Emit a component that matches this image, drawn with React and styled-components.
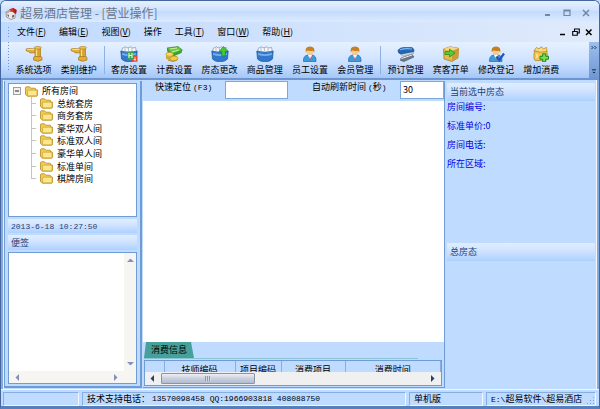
import React, { useState } from 'react';
import styled, { createGlobalStyle } from 'styled-components';

const GlobalStyle = createGlobalStyle`
    * {
        box-sizing: border-box;
    }

    body {
        margin: 0;
        background: #bfdbff;
        font-family: "Noto Sans CJK SC", sans-serif;
        font-size: 9px;
        line-height: 12px;
        color: #000;
    }

    button, input, textarea {
        font: inherit;
        color: inherit;
    }

    button {
        border: none;
        background: none;
        padding: 0;
    }
`;

const Window = styled.div`
    display: flex;
    flex-direction: column;
    min-height: 100vh;
    border: 1px solid #44669e;
    border-bottom: 3px solid #5680bd;
    border-radius: 6px 6px 0 0;
    background: #bfdbff;
    overflow: hidden;
`;

const TitleBar = styled.header`
    display: flex;
    align-items: center;
    gap: 3px;
    height: 21px;
    padding: 3px 9px 0 4px;
    background: linear-gradient(#e6f0ff, #cfe2fe 45%, #c4dbfc 50%, #dceaff);
`;

const Title = styled.h1`
    flex: 1;
    margin: 0;
    font-size: 12px;
    line-height: 16px;
    font-weight: 400;
    color: #69768c;
`;

const Controls = styled.div`
    display: flex;
    align-items: center;
    gap: ${(p) => p.$gap};
    color: ${(p) => p.$color};

    button {
        display: flex;
    }
`;

const MenuBar = styled.nav`
    display: flex;
    align-items: center;
    gap: 13px;
    height: 20px;
    padding: 0 6px 0 7px;
    background: linear-gradient(90deg, #c1daff, #dfeafb);
`;

const MenuButton = styled.button`
    line-height: 14px;
    white-space: nowrap;
`;

const Grip = styled.span`
    width: 1px;
    height: ${(p) => p.$size};
    margin-right: ${(p) => p.$space};
    background: repeating-linear-gradient(#6d97d2 0 1px, transparent 1px 3px);
`;

const Spacer = styled.span`
    flex: 1;
`;

const ToolBar = styled.div`
    display: flex;
    height: 38px;
    background: linear-gradient(#e6f1ff, #d3e5ff 45%, #bcd7ff 75%, #a5c6f5);
    border-bottom: 2px solid #6d96d0;
    padding-left: 7px;
`;

const ToolGroup = styled.div`
    flex: 1;
    display: flex;
    padding: 4px 25px 0 1px;
`;

const ToolButton = styled.button`
    flex: 1;
    display: flex;
    flex-direction: column;
    align-items: center;
    gap: 2px;
    line-height: 12px;
    white-space: nowrap;
`;

const Divider = styled.span`
    width: 1px;
    height: 28px;
    margin: 0 2px;
    background: #8fb2e3;
`;

const ToolMore = styled.button`
    display: flex;
    flex-direction: column;
    justify-content: space-between;
    align-items: center;
    width: 10px;
    padding: 3px 0;
    background: linear-gradient(#9dbfee, #6f97d2);
`;

const Body = styled.main`
    flex: 1;
    display: flex;
    min-height: 0;
    border: solid #86a9dc;
    border-width: 0 2px;
    padding: 1px 1px 0;
    box-shadow: inset 1px 0 #e9f3ff, inset -1px 0 #f3f8ff;
`;

const Sidebar = styled.aside`
    flex: 0 0 138px;
    display: flex;
    flex-direction: column;
    gap: 2px;
    margin-bottom: 1px;
    padding: 2px 3px;
    border: solid #6f9bd6;
    border-width: 0 2px 2px 1px;
`;

const Tree = styled.ul`
    flex: 1;
    margin: 0;
    padding: 1px 0 0 4px;
    list-style: none;
    background: #fff;
    border: 1px solid #6f9bd6;
`;

const Branch = styled.ul`
    display: grid;
    grid-auto-rows: 1fr;
    height: 88px;
    margin: 0 0 0 18px;
    padding: 0;
    list-style: none;
    background: linear-gradient(#c4c4c4, #c4c4c4) 0 0 / 1px 82px no-repeat;
`;

const Leaf = styled.li`
    display: flex;
    align-items: center;
    gap: 4px;
    line-height: 11px;
    white-space: nowrap;

    &::before {
        content: "";
        width: 5px;
        height: 1px;
        background: #c4c4c4;
    }
`;

const Expander = styled.button`
    display: flex;
`;

const RootRow = styled.div`
    display: flex;
    align-items: center;
    gap: 4px;
    height: 12px;
`;

const PanelHead = styled.h2`
    margin: 0;
    height: ${(p) => p.$height};
    padding: 0 3px;
    font-size: 9px;
    line-height: ${(p) => p.$height};
    font-weight: 400;
    color: #1c3f78;
    background: linear-gradient(#e2eeff, #cde1ff 50%, #add1ff);
`;

const Mono = styled.span`
    font-family: "Liberation Mono", monospace;
    font-size: 8px;
`;

const NoteBox = styled.div`
    flex: 1;
    display: grid;
    grid-template: 1fr 12px / 1fr 12px;
    background: #fff;
    border: 1px solid #6f9bd6;
`;

const NoteText = styled.textarea`
    width: 100%;
    height: 100%;
    border: none;
    outline: none;
    padding: 2px;
    resize: none;
    background: #fff;
`;

const Scroll = styled.div`
    display: flex;
    flex-direction: ${(p) => (p.$vertical ? 'column' : 'row')};
    align-items: center;
    justify-content: space-between;
    padding: ${(p) => (p.$vertical ? '4px 0' : '0 5px')};
    background: #f6f5f2;

    button {
        display: flex;
    }
`;

const Center = styled.section`
    flex: 1;
    display: flex;
    flex-direction: column;
    min-width: 0;
    margin: 0 0 1px 1px;
    background: #fff;
    border: solid #6f9bd6;
    border-width: 0 1px 1px 0;
`;

const FilterBar = styled.form`
    display: flex;
    align-items: flex-start;
    height: 20px;
    padding-left: 12px;
    background: #bfdbff;
`;

const FieldLabel = styled.label`
    width: ${(p) => p.$width};
    margin-left: ${(p) => p.$gap || 0};
    line-height: 11px;
    white-space: nowrap;
`;

const Field = styled.input`
    width: ${(p) => p.$width};
    flex: ${(p) => (p.$width ? 'none' : 1)};
    min-width: 0;
    height: 18px;
    padding: 0 2px 2px;
    border: 1px solid #7ba6df;
    border-radius: 0;
    background: #fff;
    outline: none;
`;

const RoomArea = styled.div`
    flex: 1;
`;

const Bill = styled.div`
    padding: 0 2px 1px 1px;
    background: #bfdbff;
`;

const Tabs = styled.div`
    width: 92%;
    height: 17px;
    border-bottom: 1px solid #8cc3d6;
`;

const Tab = styled.button`
    height: 16px;
    width: 50px;
    line-height: 16px;
    background: #48a09b;
    clip-path: polygon(2px 0, 47px 0, 100% 100%, 0 100%);
`;

const BillGrid = styled.div`
    margin-top: 1px;
    border: 1px solid #6f9bd6;
`;

const HeadClip = styled.div`
    height: 11px;
    overflow: hidden;
`;

const BillTable = styled.table`
    width: 100%;
    table-layout: fixed;
    border-collapse: collapse;

    th {
        height: 16px;
        padding: 1px 0 0;
        font-weight: 400;
        line-height: 14px;
        border-right: 1px solid #86aee3;
        white-space: nowrap;
    }
`;

const ThumbTrack = styled.div`
    display: flex;
    align-items: center;
    gap: 5px;
    height: 13px;
    padding: 0 5px 0 4px;
    background: #f0f0f0;

    button {
        display: flex;
    }
`;

const Thumb = styled.span`
    width: 94px;
    height: 11px;
    display: flex;
    align-items: center;
    justify-content: center;
    border: 1px solid #8b93a8;
    border-radius: 1px;
    background: linear-gradient(#eceff6, #c9cfdd 50%, #b3bccf);

    &::after {
        content: "";
        width: 6px;
        height: 5px;
        background: repeating-linear-gradient(90deg, #8f97aa 0 1px, #d5dae5 1px 2px);
    }
`;

const InfoColumn = styled.aside`
    flex: 0 0 151px;
    display: flex;
    flex-direction: column;
    padding: 2px 1px 0 2px;
`;

const InfoPanel = styled.section`
    flex: ${(p) => p.$grow} 1 0;
`;

const RoomFacts = styled.dl`
    display: grid;
    grid-template-columns: max-content 1fr;
    grid-auto-rows: 19px;
    margin: 0;
    line-height: 12px;
    color: #0000e0;

    dd {
        margin: 0;
    }
`;

const StatusBar = styled.footer`
    display: flex;
    gap: 3px;
    padding: 2px 3px 0 2px;
    border-top: 1px solid #f3f8ff;
`;

const StatusCell = styled.div`
    flex: ${(p) => p.$flex};
    display: flex;
    align-items: center;
    gap: 2px;
    height: 14px;
    padding-left: 4px;
    border: 1px solid;
    border-color: #86aee3 #f0f7ff #f0f7ff #86aee3;
    white-space: nowrap;
    overflow: hidden;
`;

const Pic = ({ w = 18, h = 16, children }) => (
    <svg width={w} height={h} viewBox={`0 0 ${w} ${h}`} aria-hidden="true">
        {children}
    </svg>
);

const Arrow = ({ dir, color = '#8191bd' }) => {
    const shapes = {
        up: 'M0 5 L3.5 1.5 L7 5Z',
        down: 'M0 2 L3.5 5.5 L7 2Z',
        left: 'M5 0 L1.5 3.5 L5 7Z',
        right: 'M2 0 L5.5 3.5 L2 7Z',
    };
    return (
        <Pic w={7} h={7}>
            <path d={shapes[dir]} fill={color} />
        </Pic>
    );
};

const Tap = () => (
    <Pic>
        <path d="M1 3.5 Q1 2.5 3 2.5 L11 3 V6.5 L7 7 Q4 7 3.5 5.5 L1.5 5Z" fill="#e0ae37" stroke="#a8761a" strokeWidth=".7" />
        <path d="M2 3.3 L10 3.7" stroke="#fae79a" strokeWidth=".9" />
        <path d="M10 1.5 H15.5 V12 H10Z" fill="#dca32b" stroke="#a8761a" strokeWidth=".7" />
        <path d="M11.5 2 V12" stroke="#f9df83" strokeWidth="1.3" />
        <ellipse cx="12.8" cy="1.8" rx="3.7" ry="1.3" fill="#f0c957" stroke="#a8761a" strokeWidth=".6" />
        <path d="M8.5 12 Q8.5 10.5 10 10.5 H15.5 Q17 10.5 17 12 V14 Q13 16.5 8.5 14Z" fill="#e2ad35" stroke="#a8761a" strokeWidth=".7" />
    </Pic>
);

const Bin = ({ mark }) => (
    <Pic>
        <path d="M2.5 2 L6 .8 L7 2 L11 .8 L12 2 L15.5 1.5 L16.5 6 H1.5Z" fill="#f4f7fb" stroke="#8595a8" strokeWidth=".7" />
        <path d="M5 2 V5 M8.5 2 V5 M12 2 V5" stroke="#9aa9ba" strokeWidth=".7" />
        <path d="M.8 5 Q9 8 17.2 5 L16.5 13 Q14 15.8 9 15.8 Q4 15.8 1.5 13Z" fill="#2f78cc" stroke="#1b559f" strokeWidth=".7" />
        <path d="M2 7 Q9 9.3 16 7 L15.8 9 Q9 11 2.2 9Z" fill="#73b1ee" />
        {mark === 'up' && <path d="M12.5 .5 L17 5.5 H14.3 V10 H10.7 V5.5 H8Z" fill="#45c937" stroke="#198719" strokeWidth=".7" />}
        {mark === 'rooms' && (
            <>
                <path d="M7.5 5.5 H13 V14 H7.5Z" fill="#38a848" />
                <path d="M9 7 V12 M9 9.5 H12 M12 7 V12" stroke="#fff" strokeWidth="1" />
                <path d="M13 9.5 H17.5 V15.8 H11.5 V13 H13Z" fill="#e34b35" />
                <path d="M13.5 13.5 H16 M15 11 V15" stroke="#ffe4dc" strokeWidth=".8" />
            </>
        )}
    </Pic>
);

const Money = () => (
    <Pic>
        <path d="M2 2 L13 .6 L17.3 4 L7 8.5Z" fill="#66c83f" stroke="#278822" strokeWidth=".7" />
        <path d="M2 2 V5 L7 11 L16.5 7 L17.3 4 L7 8Z" fill="#36a32e" />
        <path d="M5 3 L12 2 M7 5.8 L14 4" stroke="#c7ef9e" strokeWidth="1" />
        <ellipse cx="4.6" cy="8.3" rx="3.7" ry="2" fill="#f7db62" stroke="#a8831d" strokeWidth=".6" />
        <path d="M1 9 V12.5 Q4 15 8.3 12.5 V9 Q4 12 1 9Z" fill="#d7a727" />
        <ellipse cx="9" cy="12.5" rx="4" ry="2.4" fill="#f3cd49" stroke="#a8831d" strokeWidth=".6" />
        <path d="M3 14 Q8 17 12 14" stroke="#b98c20" fill="none" />
    </Pic>
);

const Person = ({ check }) => (
    <Pic>
        <path d="M2.5 15.5 Q2 9.5 7 9 H11 Q15.5 9.5 15 15.5Z" fill="#3e99df" stroke="#216bae" strokeWidth=".7" />
        <path d="M7 9 L9 13.5 L11 9Z" fill="#fff" />
        <path d="M9 10 L8.3 13 L9 14.5 L9.7 13Z" fill="#d44a38" />
        <circle cx="9" cy="5.5" r="3.6" fill="#f6cb93" />
        <path d="M4.8 6.5 Q3.6 .3 9 .4 Q14.4 .3 13.2 6.5 L12 4.8 Q9 5.4 6.1 4.6Z" fill="#c5811f" />
        {check && <path d="M9.5 10.5 L12.3 14.2 L17 7.5" fill="none" stroke="#1d56bd" strokeWidth="2.2" />}
    </Pic>
);

const Stapler = () => (
    <Pic>
        <path d="M4 12 L15 8.5 L17 11 L7 15.5 L3.5 14.5Z" fill="#6e7886" stroke="#4a5360" strokeWidth=".6" />
        <path d="M4.5 12.5 L15 9" stroke="#e7ebf0" strokeWidth="1" />
        <path d="M2 6.5 L15.5 4.5 L16.5 7.5 L6 10.5Z" fill="#c9d3df" stroke="#78889b" strokeWidth=".6" />
        <path d="M1 4.5 Q2 1.8 7 1.5 L15 1.6 Q17.3 2.5 17 5.5 L4 8 Q1 7.5 1 4.5Z" fill="#2366b5" stroke="#134482" strokeWidth=".6" />
        <path d="M3 3.8 Q8 2 15 3" stroke="#80b8ef" strokeWidth="1.2" fill="none" />
    </Pic>
);

const Crate = () => (
    <Pic>
        <path d="M1.5 3 L8 .8 L16.5 2.3 L16 12 L10 15.5 L2 13Z" fill="#e2ba50" stroke="#9c7524" strokeWidth=".7" />
        <path d="M1.5 3 L10 5 L16.5 2.3 L8 .8Z" fill="#f3d984" />
        <path d="M10 5 V15.3 L16 12 L16.5 2.3Z" fill="#cd9c39" />
        <path d="M3 5.5 H7.5 V3 L13 7 L7.5 11 V8.5 H3Z" fill="#53cd35" stroke="#1c871b" strokeWidth=".7" />
    </Pic>
);

const Sack = () => (
    <Pic>
        <path d="M2.5 5 Q1 12 3 14.5 H14 Q16.5 11 14.5 4.5Z" fill="#efc64d" stroke="#ad7e1d" strokeWidth=".7" />
        <path d="M2 4.5 L4.5 1.5 L7 3 L9 .7 L11.5 2.7 L14.5 1.5 L15 5.5 Q8 7.5 2 4.5Z" fill="#f8da7c" stroke="#ad7e1d" strokeWidth=".7" />
        <path d="M5 8 V12" stroke="#fdf0b5" strokeWidth="1.3" />
        <path d="M10.7 7.8 H13.7 V10.3 H16.5 V13.2 H13.7 V15.8 H10.7 V13.2 H8 V10.3 H10.7Z" fill="#7ade55" stroke="#1d8922" strokeWidth="1" />
    </Pic>
);

const Folder = () => (
    <Pic w={13} h={11}>
        <path d="M.5 8.5 V1.8 Q.5 .8 1.5 .8 H4.5 L5.8 2.2 H9.8 Q10.6 2.2 10.6 3 V4 H12.4 V9.2 Q12.4 10.2 11.4 10.2 H2.5Z" fill="#f0cb55" stroke="#b68a1e" strokeWidth=".8" />
        <path d="M2.6 9.8 V4.8 Q2.6 4.2 3.2 4.2 H12 V9.8Z" fill="#fbe88c" stroke="#c69a2a" strokeWidth=".6" />
    </Pic>
);

const Logo = () => (
    <Pic w={12} h={13}>
        <path d="M1 5 L5 3 L10 6 V11 L6 12.5 L1.5 10Z" fill="#ece9e7" stroke="#877d7c" strokeWidth=".7" />
        <path d="M4 2.5 L8 .8 L11.6 3 L11 7 L7.5 4.8 L5.5 5Z" fill="#d8342f" />
        <path d="M8 1 L11.6 3 L11 7 L8.5 5Z" fill="#a81f20" />
        <path d="M0 5.5 L4.5 2.5 L6 4.5 L2 6.5Z" fill="#b9a6a5" />
        <path d="M2.5 7 L4 8 V10 L2.5 9Z M7 8.5 L9 7.8 V10 L7 10.8Z" fill="#6c6769" />
    </Pic>
);

const menus = [
    ['文件', 'F'],
    ['编辑', 'E'],
    ['视图', 'V'],
    ['操作'],
    ['工具', 'T'],
    ['窗口', 'W'],
    ['帮助', 'H'],
];

const tools = [
    ['系统选项', <Tap />],
    ['类别维护', <Tap />],
    null,
    ['客房设置', <Bin mark="rooms" />],
    ['计费设置', <Money />],
    ['房态更改', <Bin mark="up" />],
    ['商品管理', <Bin />],
    ['员工设置', <Person />],
    ['会员管理', <Person />],
    null,
    ['预订管理', <Stapler />],
    ['宾客开单', <Crate />],
    ['修改登记', <Person check />],
    ['增加消费', <Sack />],
];

const rooms = ['总统套房', '商务套房', '豪华双人间', '标准双人间', '豪华单人间', '标准单间', '棋牌房间'];

const facts = [
    ['房间编号:', ''],
    ['标准单价:', '0'],
    ['房间电话:', ''],
    ['所在区域:', ''],
];

const App = () => {
    const [open, setOpen] = useState(true);
    const [keyword, setKeyword] = useState('');
    const [seconds, setSeconds] = useState('30');

    return <Window>
        <GlobalStyle />
        <TitleBar>
            <Logo />
            <Title>超易酒店管理 - [营业操作]</Title>
            <Controls $gap="11px" $color="#7286a8">
                <button aria-label="最小化">
                    <Pic w={8} h={8}><path d="M1 6 H6" stroke="currentColor" strokeWidth="2" /></Pic>
                </button>
                <button aria-label="最大化">
                    <Pic w={8} h={8}><path d="M1 1 H7 V6.5 H1Z M1 2 H7" fill="none" stroke="currentColor" strokeWidth="1.2" /></Pic>
                </button>
                <button aria-label="关闭">
                    <Pic w={8} h={8}><path d="M1 1 L7 7 M7 1 L1 7" stroke="currentColor" strokeWidth="1.5" /></Pic>
                </button>
            </Controls>
        </TitleBar>

        <MenuBar>
            <Grip $size="10px" $space="-5px" />
            {menus.map(([name, key]) => (
                <MenuButton key={name}>{name}{key && <>(<u>{key}</u>)</>}</MenuButton>
            ))}
            <Spacer />
            <Controls $gap="5px" $color="#000">
                <button aria-label="最小化窗口">
                    <Pic w={8} h={8}><path d="M1 6.5 H6" stroke="currentColor" strokeWidth="1.6" /></Pic>
                </button>
                <button aria-label="还原窗口">
                    <Pic w={8} h={8}><path d="M2.5 3 V1 H7.3 V5 H5.5 M.7 3.5 H5.3 V7.3 H.7Z" fill="none" stroke="currentColor" strokeWidth="1.1" /></Pic>
                </button>
                <button aria-label="关闭窗口">
                    <Pic w={8} h={8}><path d="M1 1.5 L6.5 7 M6.5 1.5 L1 7" stroke="currentColor" strokeWidth="1.5" /></Pic>
                </button>
            </Controls>
        </MenuBar>

        <ToolBar>
            <Grip $size="30px" $space="1px" />
            <ToolGroup>
                {tools.map((tool, i) => (tool
                    ? <ToolButton key={tool[0]}>{tool[1]}{tool[0]}</ToolButton>
                    : <Divider key={i} />
                ))}
            </ToolGroup>
            <ToolMore aria-label="更多">
                <Pic w={6} h={5}><path d="M.5 1 L2 2.5 L.5 4 M3.5 1 L5 2.5 L3.5 4" fill="none" stroke="#14315f" /></Pic>
                <Pic w={6} h={6}><path d="M1 .8 H5" stroke="#14315f" /><path d="M.5 2.5 H5.5 L3 5Z" fill="#14315f" stroke="#fff" strokeWidth=".3" /></Pic>
            </ToolMore>
        </ToolBar>

        <Body>
            <Sidebar>
                <Tree>
                    <li>
                        <RootRow>
                            <Expander aria-label="展开" aria-expanded={open} onClick={() => setOpen(!open)}>
                                <Pic w={8} h={8}>
                                    <rect x=".5" y=".5" width="7" height="7" fill="#f4f2ec" stroke="#9a9fa8" />
                                    <path d="M2 4 H6" stroke="#222" />
                                    {!open && <path d="M4 2 V6" stroke="#222" />}
                                </Pic>
                            </Expander>
                            <Folder />
                            所有房间
                        </RootRow>
                        {open && (
                            <Branch>
                                {rooms.map((room) => <Leaf key={room}><Folder />{room}</Leaf>)}
                            </Branch>
                        )}
                    </li>
                </Tree>
                <PanelHead as="div" $height="14px"><Mono>2013-6-18 10:27:50</Mono></PanelHead>
                <PanelHead $height="15px" id="note">便签</PanelHead>
                <NoteBox>
                    <NoteText aria-labelledby="note" />
                    <Scroll $vertical>
                        <button aria-label="向上"><Arrow dir="up" /></button>
                        <button aria-label="向下"><Arrow dir="down" /></button>
                    </Scroll>
                    <Scroll>
                        <button aria-label="向左"><Arrow dir="left" /></button>
                        <button aria-label="向右"><Arrow dir="right" /></button>
                    </Scroll>
                    <Scroll />
                </NoteBox>
            </Sidebar>

            <Center>
                <FilterBar onSubmit={(e) => e.preventDefault()}>
                    <FieldLabel htmlFor="locate" $width="70px">快速定位 <Mono>(F3)</Mono></FieldLabel>
                    <Field id="locate" $width="63px" value={keyword} onChange={(e) => setKeyword(e.target.value)} />
                    <FieldLabel htmlFor="refresh" $width="88px" $gap="24px">自动刷新时间 <Mono>(</Mono>秒<Mono>)</Mono></FieldLabel>
                    <Field id="refresh" value={seconds} onChange={(e) => setSeconds(e.target.value)} />
                </FilterBar>
                <RoomArea />
                <Bill>
                    <Tabs>
                        <Tab>消费信息</Tab>
                    </Tabs>
                    <BillGrid>
                        <HeadClip>
                            <BillTable>
                                <colgroup>
                                    <col width="19" />
                                    <col width="71" />
                                    <col width="46" />
                                    <col width="64" />
                                    <col />
                                </colgroup>
                                <thead>
                                    <tr>
                                        <th aria-label="选择" />
                                        <th>技师编码</th>
                                        <th>项目编码</th>
                                        <th>消费项目</th>
                                        <th>消费时间</th>
                                    </tr>
                                </thead>
                            </BillTable>
                        </HeadClip>
                        <ThumbTrack>
                            <button aria-label="向左"><Arrow dir="left" color="#2c3f6b" /></button>
                            <Thumb />
                            <Spacer />
                            <button aria-label="向右"><Arrow dir="right" color="#2c3f6b" /></button>
                        </ThumbTrack>
                    </BillGrid>
                </Bill>
            </Center>

            <InfoColumn>
                <InfoPanel $grow={11}>
                    <PanelHead $height="18px">当前选中房态</PanelHead>
                    <RoomFacts>
                        {facts.map(([name, value]) => (
                            <React.Fragment key={name}>
                                <dt>{name}</dt>
                                <dd>{value}</dd>
                            </React.Fragment>
                        ))}
                    </RoomFacts>
                </InfoPanel>
                <InfoPanel $grow={10}>
                    <PanelHead $height="18px">总房态</PanelHead>
                </InfoPanel>
            </InfoColumn>
        </Body>

        <StatusBar>
            <StatusCell $flex="0 0 76px" />
            <StatusCell $flex="1">技术支持电话：<Mono>13570098458 QQ:1966903818 408088750</Mono></StatusCell>
            <StatusCell $flex="0 0 74px">单机版</StatusCell>
            <StatusCell $flex="0 0 110px">
                <span><Mono>E:\</Mono>超易软件<Mono>\</Mono>超易酒店</span>
                <Spacer />
                <Pic w={8} h={9}>
                    <path d="M6 2h1v1h-1z M3 5h1v1h-1z M6 5h1v1h-1z M0 8h1v1h-1z M3 8h1v1h-1z M6 8h1v1h-1z" fill="#7ea5dc" />
                </Pic>
            </StatusCell>
        </StatusBar>
    </Window>;
};

export default App;
